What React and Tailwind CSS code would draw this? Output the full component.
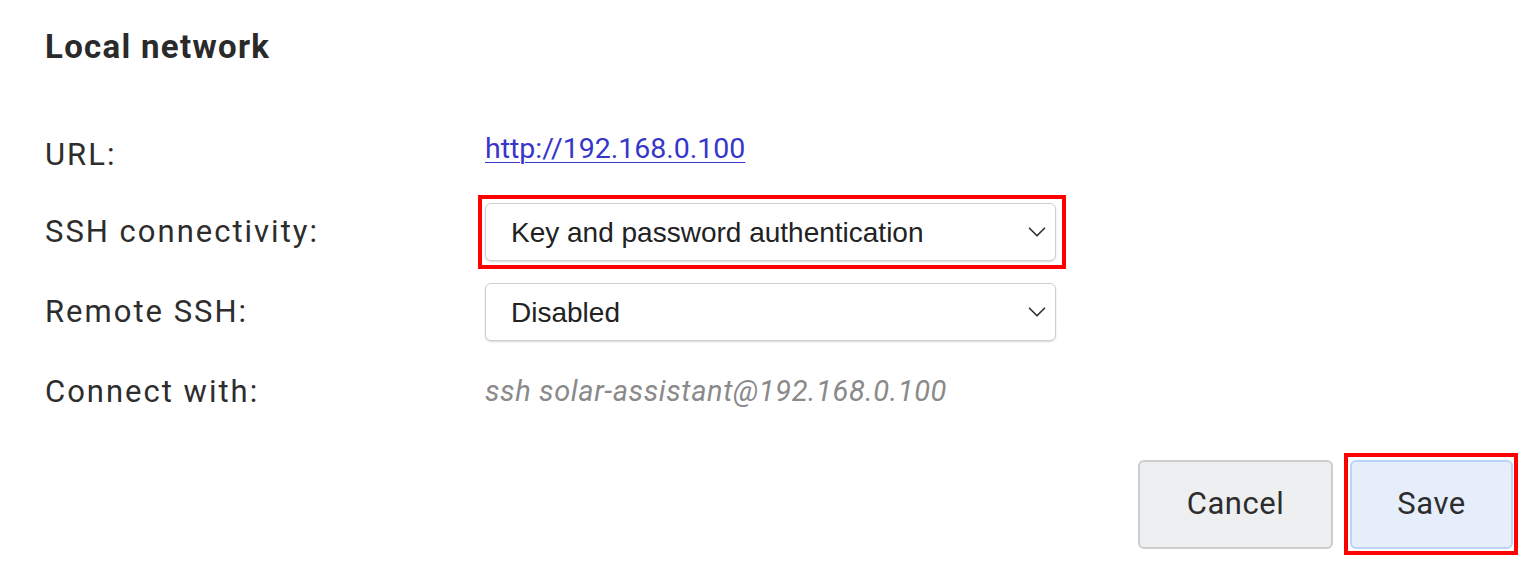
import { ChevronDown } from "lucide-react";

const labelFont = { fontFamily: "Roboto, 'Noto Sans', sans-serif" };

function Highlight({ className }) {
  // red annotation frame that lies over the control
  return <span className={"pointer-events-none absolute border-4 border-[#ff0000] " + className} />;
}

function SelectBox({ value }) {
  return (
    <div className="flex h-[58px] w-[571px] items-center justify-between rounded-[6px] border border-[#cfcfcf] bg-white pl-[25px] pr-[3px] shadow-[0_1px_2px_rgba(0,0,0,0.15)]">
      <span className="pt-[2px] text-[28px] text-[#222]" style={{ fontFamily: "'Liberation Sans', Arial, sans-serif" }}>
        {value}
      </span>
      <ChevronDown className="h-[30px] w-[30px] text-[#333]" strokeWidth={1.4} />
    </div>
  );
}

function Row({ label, children }) {
  return (
    <div className="flex h-[80px] items-center">
      <div className="w-[440px] text-[31px] tracking-[2px] text-[#2d2d2d]">{label}</div>
      <div className="flex items-center">{children}</div>
    </div>
  );
}

export default function App() {
  return (
    <div className="h-[582px] w-[1540px] bg-white pl-[45px] pr-[27px] pt-[24px]" style={labelFont}>
      <h2 className="text-[33px] font-bold leading-[46px] tracking-[1.3px] text-[#2a2a2a]">Local network</h2>
      <div className="mt-[42px]">
        <Row label={<span className="relative top-[3px]">URL:</span>}>
          <a href="#" className="-mt-[6px] text-[28.5px] text-[#3636c8] underline decoration-1 underline-offset-4">
            http://192.168.0.100
          </a>
        </Row>
        <Row label="SSH connectivity:">
          <div className="relative">
            <SelectBox value="Key and password authentication" />
            <Highlight className="-top-[8px] -bottom-[8px] -left-[7px] -right-[10px]" />
          </div>
        </Row>
        <Row label="Remote SSH:">
          <SelectBox value="Disabled" />
        </Row>
        <Row label="Connect with:">
          <span className="text-[29px] italic tracking-[0.6px] text-[#8a8a8a]">ssh solar-assistant@192.168.0.100</span>
        </Row>
      </div>
      <div className="mt-[28px] flex justify-end gap-[17px]">
        <button className="h-[89px] w-[195px] rounded-[6px] border-2 border-[#cdcdcd] bg-[#eeeff1] text-[31px] tracking-[0.5px] text-[#2d2d2d]">
          Cancel
        </button>
        <div className="relative">
          <button className="h-[89px] w-[163px] rounded-[6px] border-2 border-[#bcd2f7] bg-[#e6eefb] text-[31px] tracking-[0.5px] text-[#2d2d2d]">
            Save
          </button>
          <Highlight className="-top-[7px] -bottom-[6px] -left-[6px] -right-[5px]" />
        </div>
      </div>
    </div>
  );
}
